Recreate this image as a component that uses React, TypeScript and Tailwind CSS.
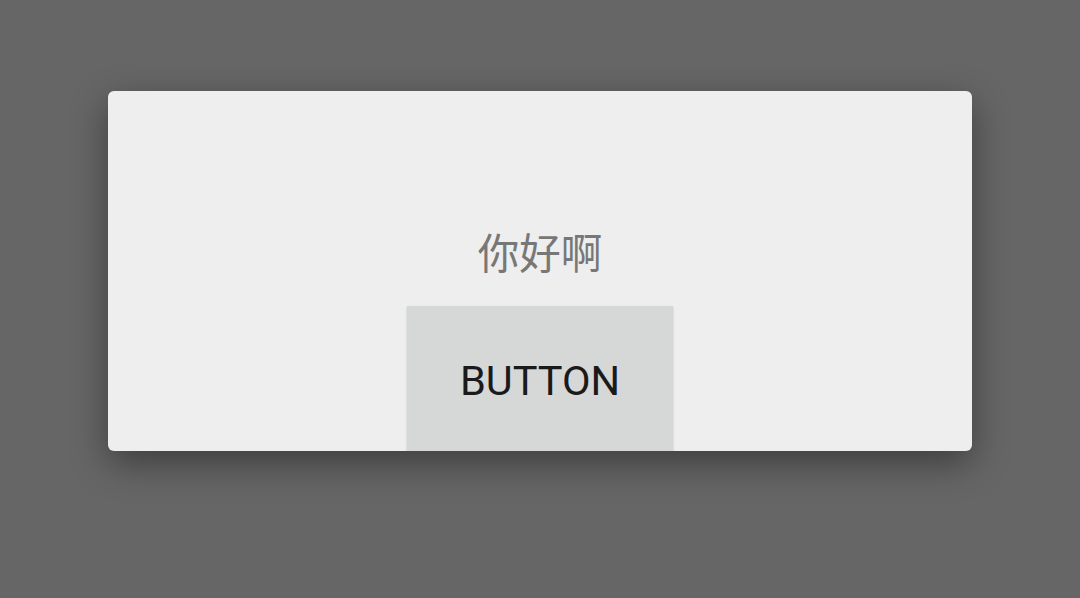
import React from "react";

export default function App() {
  return (
    <div className="w-[1080px] h-[598px] bg-[#666666] flex justify-center pt-[91px] overflow-hidden" style={{ fontFamily: 'Roboto, "Noto Sans CJK SC", sans-serif' }}>
      <div className="w-[864px] h-[360px] bg-[#eeeeee] rounded-[6px] overflow-hidden flex flex-col items-center shadow-[0_12px_36px_rgba(0,0,0,0.4)]">
        <div className="mt-[136px] h-[48px] leading-[48px] text-[41.5px] text-[#777777]" style={{ fontFamily: '"Noto Sans CJK SC", sans-serif' }}>你好啊</div>
        <button className="mt-[31px] w-[266px] h-[160px] shrink-0 bg-[#d6d7d7] text-[#1a1a1a] text-[41.5px] shadow-[0_1px_2px_rgba(0,0,0,0.2)] flex items-center justify-center pb-[10px]">BUTTON</button>
      </div>
    </div>
  );
}
